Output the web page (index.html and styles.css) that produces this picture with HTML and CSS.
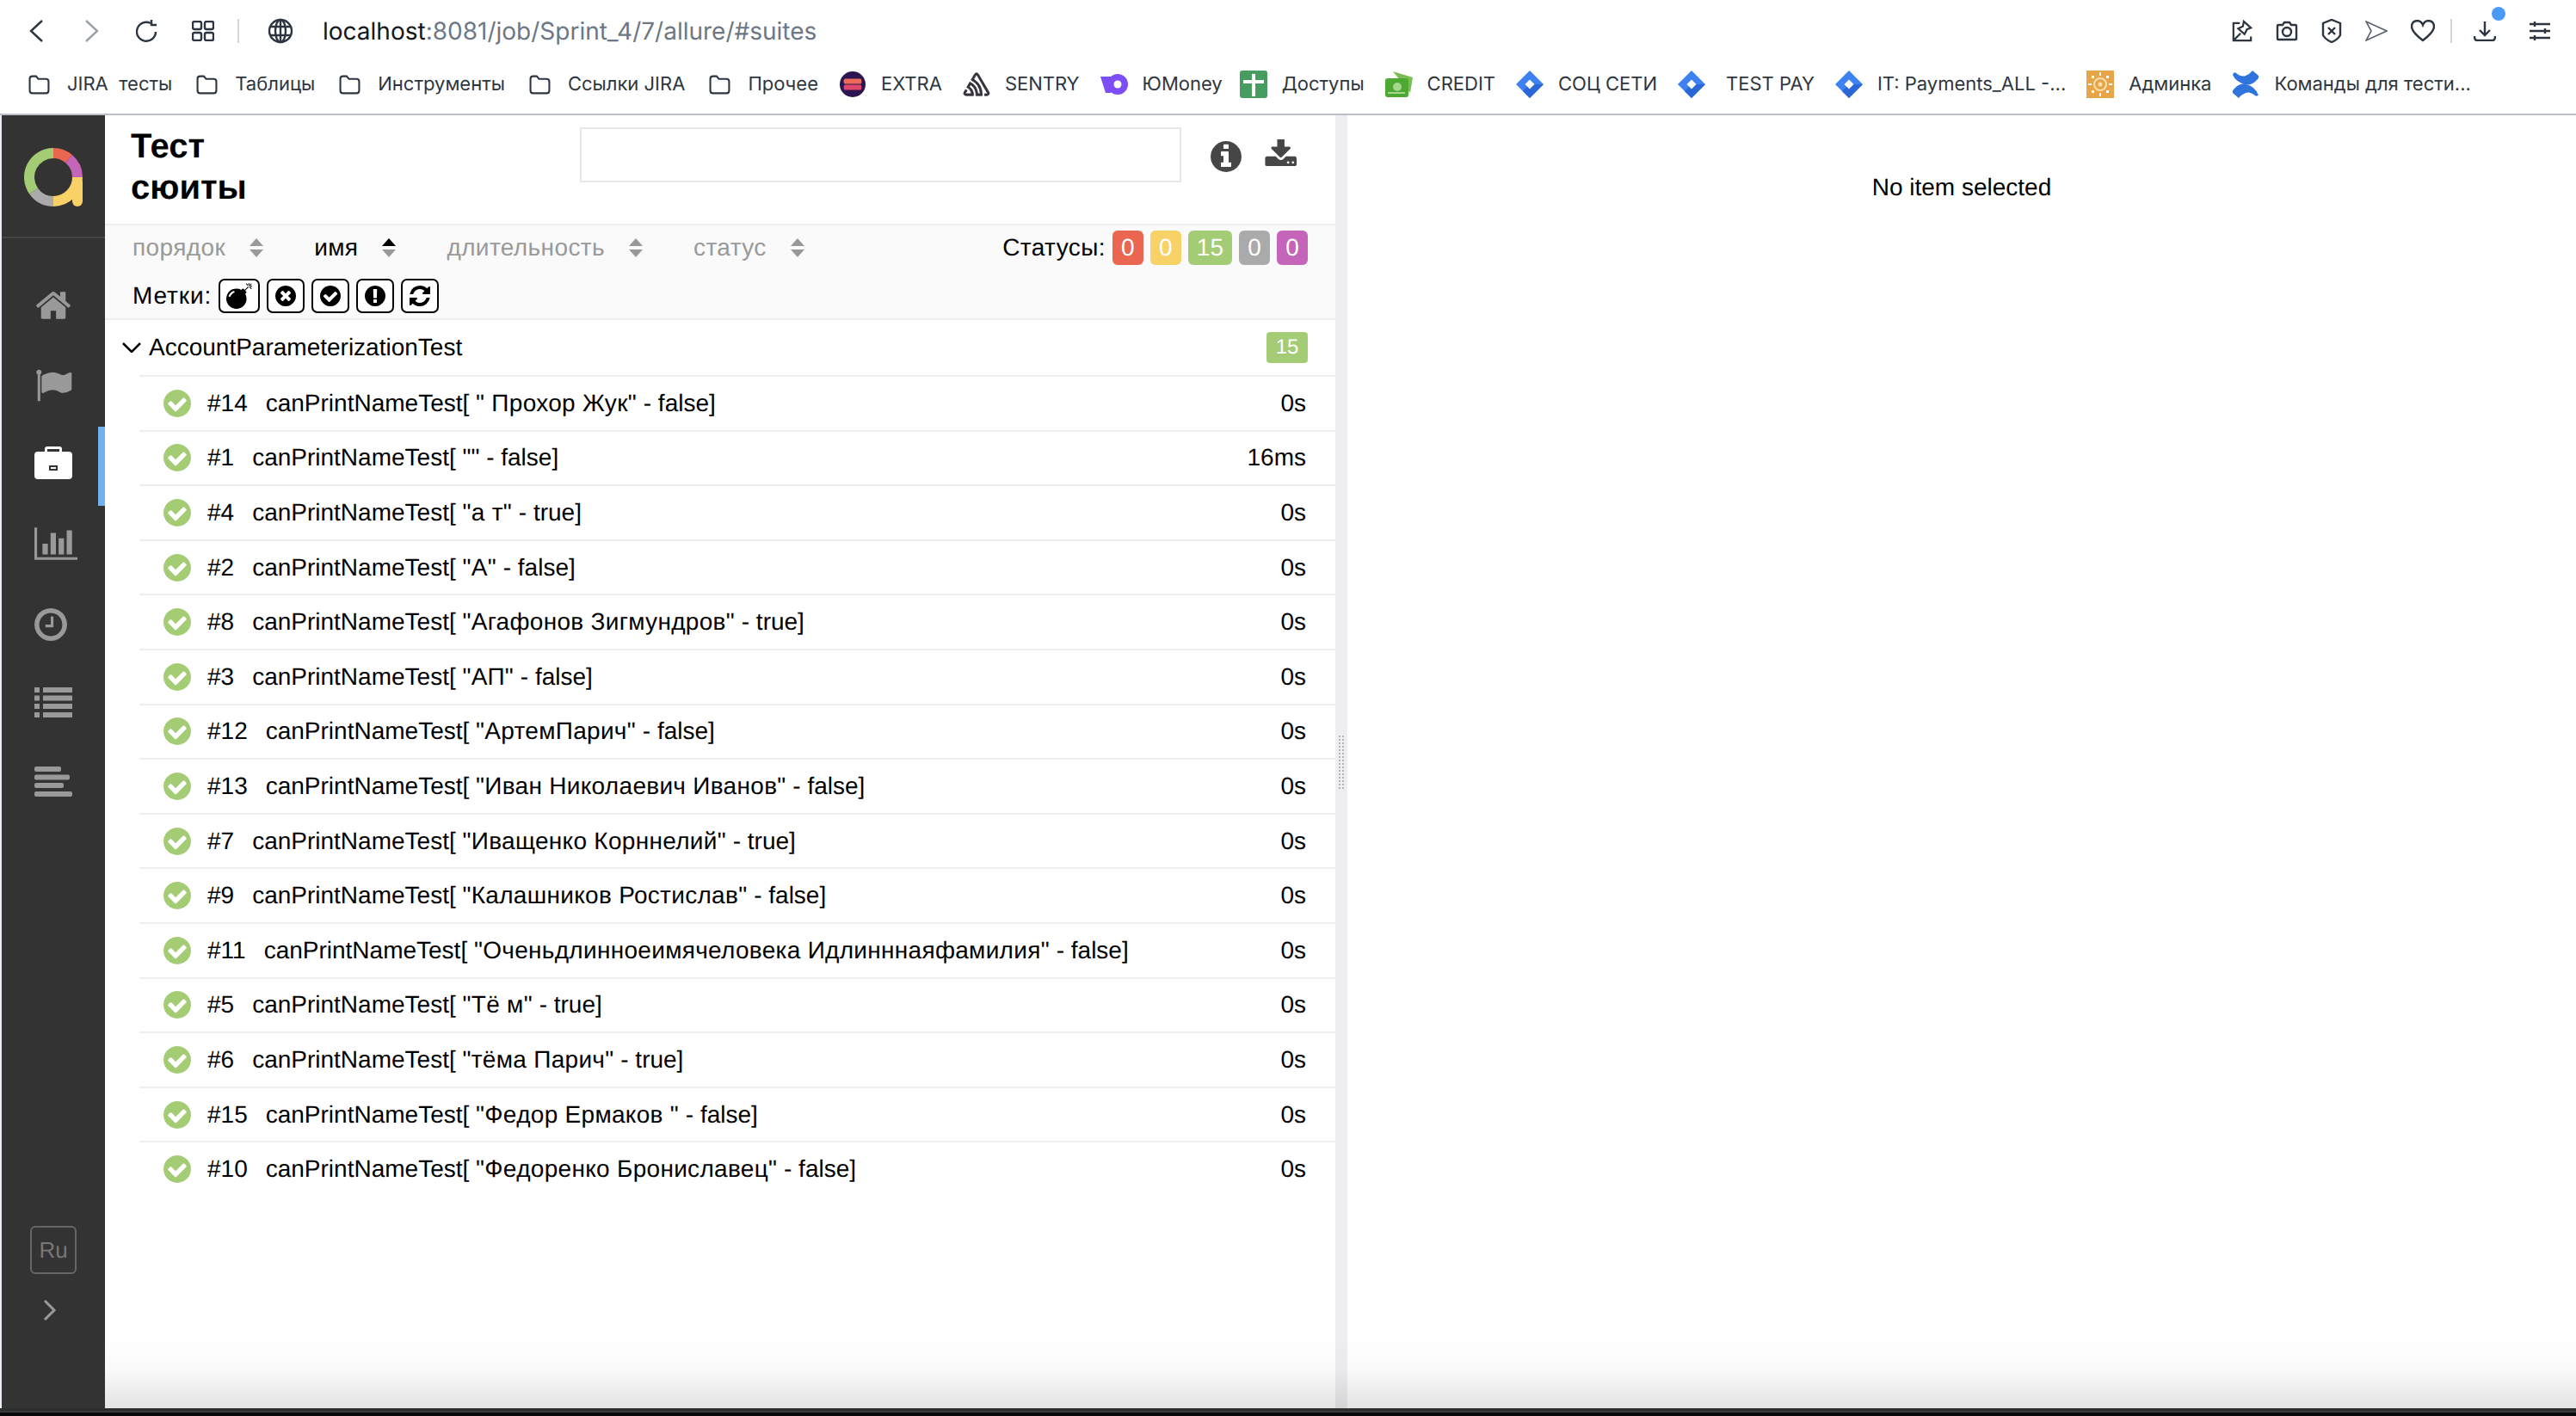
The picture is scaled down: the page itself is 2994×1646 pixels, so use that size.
FILE: index.html
```html
<!DOCTYPE html>
<html>
    <head>
        <meta charset="utf-8" />
        <title>Allure Report</title>
        <link rel="stylesheet" href="styles.css">
    </head>
    <body>
        <svg class="sprite" xmlns="http://www.w3.org/2000/svg">
            <symbol id="folder" viewBox="0 0 24 22"><path d="M1.500 4.500q0-3 3-3h4l2.500 3h8.500q3 0 3 3v10q0 3-3 3h-15q-3 0-3-3z" fill="none" stroke="currentColor" stroke-width="2"/></symbol>
            <symbol id="jira" viewBox="0 0 32 32"><path d="M16 0L32 16 16 32 0 16z" fill="#3d82f0"/><path d="M16 16L32 16 16 32 8 24z" fill="#2a66d6"/><path d="M16 10.500L21.500 16 16 21.500 10.500 16z" fill="#fff"/></symbol>
            <symbol id="check" viewBox="128 128 1536 1536"><path d="M1412 734q0-28-18-46l-91-90q-19-19-45-19t-45 19l-408 407-226-226q-19-19-45-19t-45 19l-91 90q-18 18-18 46 0 27 18 45l362 362q19 19 45 19 27 0 46-19l543-543q18-18 18-45zm252 162q0 209-103 385.500t-279.500 279.500-385.500 103-385.500-103-279.500-279.500-103-385.500 103-385.500 279.500-279.500 385.500-103 385.500 103 279.500 279.500 103 385.500z"/></symbol>
        </svg>

        <header class="browser">
            <div class="browser_top">
                <svg class="bi bi_back" viewBox="0 0 18 28"><path d="M16 2L3 14l13 12"/></svg>
                <svg class="bi bi_fwd" viewBox="0 0 18 28"><path d="M2 2l13 12L2 26"/></svg>
                <svg class="bi bi_reload" viewBox="0 0 26 28"><path d="M23 15a11 11 0 1 1-6-10"/><path d="M18 1v6h6" /></svg>
                <svg class="bi bi_grid" viewBox="0 0 26 24"><rect x="1" y="1" width="10" height="9" rx="2"/><rect x="15" y="1" width="10" height="9" rx="2"/><rect x="1" y="14" width="10" height="9" rx="2"/><rect x="15" y="14" width="10" height="9" rx="2"/></svg>
                <div class="bsep"></div>
                <svg class="bi bi_globe" viewBox="0 0 30 30"><circle cx="15" cy="15" r="13"/><ellipse cx="15" cy="15" rx="6" ry="13"/><path d="M3 10h24M3 20h24M15 2v26"/></svg>
                <div class="address"><b>localhost</b>:8081/job/Sprint_4/7/allure/#suites</div>
                <div class="browser_tools">
                    <svg class="bi" width="24" height="26" viewBox="0 0 26 28"><path d="M10 4H2v22h22v-5"/><path d="M3 25l8-8M15 2l9 8-5 2-3 6-8-7 6-3z"/></svg>
                    <svg class="bi" width="26" height="24" viewBox="0 0 26 24"><path d="M2 6q0-1 1-1h5l2-3h6l2 3h5q1 0 1 1v15q0 1-1 1H3q-1 0-1-1z"/><circle cx="13" cy="13" r="5"/></svg>
                    <svg class="bi" width="24" height="28" viewBox="0 0 24 28"><path d="M12 1l10 4v14q-3 5-10 8Q5 24 2 19V5z"/><path d="M8 10l8 8M16 10l-8 8"/></svg>
                    <svg class="bi bi_thin" width="26" height="24" viewBox="0 0 26 24"><path d="M1 1l24 11L1 23l6-11z"/></svg>
                    <svg class="bi" width="28" height="26" viewBox="0 0 28 26"><path d="M14 24Q1 14 1 8q0-6 6-7 5 0 7 5 2-5 7-5 6 1 6 7 0 6-13 16z"/></svg>
                    <div class="bsep bsep_tools"></div>
                    <div class="dl">
                        <svg class="bi" width="26" height="24" viewBox="0 0 26 24"><path d="M13 1v16M7 11l6 6 6-6M1 18q0 5 3 5h18q3 0 3-5"/></svg>
                        <span class="dl_dot"></span>
                    </div>
                    <svg class="bi bi_sliders" width="24" height="22" viewBox="0 0 24 22"><path d="M0 3h24M0 11h24M0 19h24M6 0v6M18 8v6M6 16v6"/></svg>
                </div>
            </div>
            <div class="bookmarks">
                <a class="bm_dir"><svg class="bm_folder"><use href="#folder"/></svg>JIRA&nbsp; тесты</a>
                <a class="bm_dir"><svg class="bm_folder"><use href="#folder"/></svg>Таблицы</a>
                <a class="bm_dir"><svg class="bm_folder"><use href="#folder"/></svg>Инструменты</a>
                <a class="bm_dir"><svg class="bm_folder"><use href="#folder"/></svg>Ссылки JIRA</a>
                <a class="bm_dir"><svg class="bm_folder"><use href="#folder"/></svg>Прочее</a>
                <a><svg class="bm_icon" viewBox="0 0 32 32"><circle cx="16" cy="16" r="16" fill="#2c1650"/><rect x="5" y="9" width="22" height="6.500" rx="2" fill="#ee6a58"/><rect x="5" y="16.500" width="22" height="6.500" rx="2" fill="#e2466a"/></svg>EXTRA</a>
                <a><svg class="bm_icon" viewBox="0 0 24 24"><path fill="#36323c" stroke="#36323c" stroke-width=".6" d="M13.910 2.505c-.873-1.448-2.972-1.448-3.844 0L6.904 7.920a15.478 15.478 0 0 1 8.530 12.811h-2.221A13.301 13.301 0 0 0 5.784 9.814l-2.926 5.060a7.650 7.650 0 0 1 4.435 5.848H2.194a.365.365 0 0 1-.298-.534l1.413-2.402a5.160 5.160 0 0 0-1.614-.913L.296 19.275a2.182 2.182 0 0 0 .812 2.999 2.240 2.240 0 0 0 1.086.288h6.983a9.322 9.322 0 0 0-3.845-8.318l1.110-1.922a11.470 11.470 0 0 1 4.950 10.240h5.915a17.242 17.242 0 0 0-7.885-15.280l2.244-3.845a.370.370 0 0 1 .504-.130c.255.140 9.750 16.708 9.928 16.900a.365.365 0 0 1-.327.543h-2.287c.029.612.029 1.223 0 1.831h2.297a2.206 2.206 0 0 0 1.922-3.310z"/></svg>SENTRY</a>
                <a class="bm_tight"><svg class="bm_icon" viewBox="0 0 32 24"><path fill="#7d4df5" d="M0 3h12v19H6z"/><circle cx="20" cy="12" r="12" fill="#7d4df5"/><circle cx="20" cy="12" r="4.500" fill="#fff"/></svg>ЮMoney</a>
                <a><svg class="bm_icon bm_tall" viewBox="0 0 32 32"><rect width="32" height="32" rx="3" fill="#479c60"/><path d="M14 4h4v26h-4zM4 11h24v4H4z" fill="#fff"/></svg>Доступы</a>
                <a><svg class="bm_icon bm_tall" viewBox="0 0 32 32"><path d="M9 1l23 7-3 18z" fill="#7cbc52"/><rect y="9" width="27" height="22" rx="3" fill="#4da934"/><circle cx="14" cy="19" r="5" fill="#a4d98c"/><rect x="3" y="25" width="20" height="2" fill="#a4d98c"/></svg>CREDIT</a>
                <a><svg class="bm_icon bm_tall"><use href="#jira"/></svg>СОЦ СЕТИ</a>
                <a class="bm_wide"><svg class="bm_icon bm_tall"><use href="#jira"/></svg>TEST PAY</a>
                <a><svg class="bm_icon bm_tall"><use href="#jira"/></svg>IT: Payments_ALL -...</a>
                <a><svg class="bm_icon bm_tall" viewBox="0 0 32 32"><rect width="32" height="32" fill="#e8a548"/><circle cx="16" cy="16" r="7" fill="none" stroke="#f8dfb0" stroke-width="2"/><circle cx="16" cy="16" r="2.500" fill="#f8dfb0"/><path d="M15 2h2v4h-2zM15 26h2v4h-2zM2 15h4v2H2zM26 15h4v2h-4zM6 6h3v3H6zM23 6h3v3h-3zM6 23h3v3H6zM23 23h3v3h-3z" fill="#fff"/></svg>Админка</a>
                <a><svg class="bm_icon bm_tall" viewBox="0 0 32 32"><path fill="#2f74dc" d="M1 5q1-4 4-2 6 5 11 3 5-2 8-6l7 6q1 2-1 4-7 8-14 6Q5 14 1 5zM31 27q-1 4-4 2-6-5-11-3-5 2-8 6l-7-6q-1-2 1-4 7-8 14-6 11 2 15 13z"/></svg>Команды для тести...</a>
            </div>
        </header>

        <div class="app">
            <nav class="side">
                <div class="side_logo">
                    <svg class="logo" viewBox="0 0 68 68" fill="none" stroke-width="12">
                        <rect x="56" y="34" width="12" height="34" rx="6" fill="#f8d267"/>
                        <path d="M34 6A28 28 0 0 1 52 12.600" stroke="#ea6650"/>
                        <path d="M52 12.600A28 28 0 0 1 62 34" stroke="#c465b9"/>
                        <path d="M62 34A28 28 0 0 1 34 62" stroke="#f8d267"/>
                        <path d="M34 62A28 28 0 0 1 11.100 50.100" stroke="#aaaaaa"/>
                        <path d="M11.100 50.100A28 28 0 0 1 34 6" stroke="#a3cc74"/>
                    </svg>
                </div>
                <ul class="side_menu">
                    <li><svg viewBox="128 128 1536 1536" class="nav_ic nav_home"><path d="M1472 992v480q0 26-19 45t-45 19h-384v-384h-256v384h-384q-26 0-45-19t-19-45v-480q0-1 .5-3t.5-3l575-474 575 474q1 2 1 6zm223-69l-62 74q-8 9-21 11h-3q-13 0-21-7l-692-577-692 577q-12 8-24 7-13-2-21-11l-62-74q-8-10-7-23.500t11-21.500l719-599q32-26 76-26t76 26l244 204v-195q0-14 9-23t23-9h192q14 0 23 9t9 23v408l219 182q10 8 11 21.500t-7 23.500z"/></svg></li>
                    <li><svg viewBox="0 100 1792 1600" class="nav_ic"><path d="M320 256q0 72-64 110v1266q0 13-9.500 22.500t-22.500 9.500h-64q-13 0-22.500-9.500t-9.500-22.500v-1266q-64-38-64-110 0-53 37.500-90.500t90.500-37.500 90.500 37.500 37.500 90.500zm1472 64v763q0 25-12.500 38.500t-39.500 27.500q-215 116-369 116-61 0-123.500-22t-108.500-48-115.500-48-142.500-22q-192 0-464 146-17 9-33 9-26 0-45-19t-19-45v-742q0-32 31-55 21-14 79-43 236-120 421-120 107 0 200 29t219 88q38 19 88 19 54 0 117.500-21t110-47 88-47 54.500-21q26 0 45 19t19 45z"/></svg></li>
                    <li class="active"><svg viewBox="0 0 44 38" class="nav_ic nav_case"><path fill-rule="evenodd" d="M12 6V3q0-3 3-3h14q3 0 3 3v3h8q4 0 4 4v24q0 4-4 4H4q-4 0-4-4V10q0-4 4-4zM15 3v3h14V3zM17 22v6h10v-6zM19 24h6v2h-6z"/></svg></li>
                    <li><svg viewBox="0 128 2048 1536" class="nav_ic nav_chart"><path d="M640 896v512h-256v-512h256zm384-512v1024h-256v-1024h256zm1024 1152v128h-2048v-1536h128v1408h1920zm-640-896v768h-256v-768h256zm384-384v1152h-256v-1152h256z"/></svg></li>
                    <li><svg viewBox="128 128 1536 1536" class="nav_ic nav_clock"><path d="M1024 544v448q0 14-9 23t-23 9h-320q-14 0-23-9t-9-23v-64q0-14 9-23t23-9h224v-352q0-14 9-23t23-9h64q14 0 23 9t9 23zm416 352q0-148-73-273t-198-198-273-73-273 73-198 198-73 273 73 273 198 198 273 73 273-73 198-198 73-273zm224 0q0 209-103 385.500t-279.500 279.500-385.500 103-385.500-103-279.500-279.500-103-385.500 103-385.500 279.500-279.500 385.500-103 385.500 103 279.500 279.500 103 385.500z"/></svg></li>
                    <li><svg viewBox="0 0 44 35" class="nav_ic nav_list"><path d="M0 0h6v6H0zM10 0h34v6H10zM0 9.500h6v6H0zM10 9.500h34v6H10zM0 19h6v6H0zM10 19h34v6H10zM0 29h6v6H0zM10 29h34v6H10z"/></svg></li>
                    <li><svg viewBox="0 0 44 35" class="nav_ic nav_list"><rect width="31" height="6" rx="2"/><rect y="9.500" width="41" height="6" rx="2"/><rect y="19" width="34" height="6" rx="2"/><rect y="29" width="44" height="6" rx="2"/></svg></li>
                </ul>
                <div class="side_bottom">
                    <div class="lang">Ru</div>
                    <svg class="side_expand" viewBox="0 0 16 24"><path d="M2 1l11 11L2 23"/></svg>
                </div>
            </nav>

            <div class="panes">
                <section class="pane_left">
                    <div class="pane_head">
                        <h2 class="pane_title">Тест<br>сюиты</h2>
                        <input class="search" type="text">
                        <svg class="head_ic head_info" viewBox="128 128 1536 1536"><path d="M1152 1376v-160q0-14-9-23t-23-9h-96v-512q0-14-9-23t-23-9h-320q-14 0-23 9t-9 23v160q0 14 9 23t23 9h96v320h-96q-14 0-23 9t-9 23v160q0 14 9 23t23 9h448q14 0 23-9t9-23zm-128-896v-160q0-14-9-23t-23-9h-192q-14 0-23 9t-9 23v160q0 14 9 23t23 9h192q14 0 23-9t9-23zm640 416q0 209-103 385.500t-279.500 279.500-385.500 103-385.500-103-279.500-279.500-103-385.500 103-385.500 279.500-279.500 385.500-103 385.500 103 279.500 279.500 103 385.500z"/></svg>
                        <svg class="head_ic head_dl" viewBox="0 128 1728 1536"><path d="M1344 1344q0-26-19-45t-45-19-45 19-19 45 19 45 45 19 45-19 19-45zm256 0q0-26-19-45t-45-19-45 19-19 45 19 45 45 19 45-19 19-45zm128-224v320q0 40-28 68t-68 28h-1472q-40 0-68-28t-28-68v-320q0-40 28-68t68-28h465l135 136q58 56 136 56t136-56l136-136h464q40 0 68 28t28 68zm-325-569q17 41-14 70l-448 448q-18 19-45 19t-45-19l-448-448q-31-29-14-70 17-39 59-39h256v-448q0-26 19-45t45-19h256q26 0 45 19t19 45v448h256q42 0 59 39z"/></svg>
                    </div>

                    <div class="filters">
                        <div class="filters_row">
                            <span class="sort">порядок <svg viewBox="0 0 18 22"><path d="M9 0l8 9H1zM9 22l8-9H1z"/></svg></span>
                            <span class="sort sort_on">имя <svg viewBox="0 0 18 22"><path class="up" d="M9 0l8 9H1z"/><path d="M9 22l8-9H1z"/></svg></span>
                            <span class="sort">длительность <svg viewBox="0 0 18 22"><path d="M9 0l8 9H1zM9 22l8-9H1z"/></svg></span>
                            <span class="sort">статус <svg viewBox="0 0 18 22"><path d="M9 0l8 9H1zM9 22l8-9H1z"/></svg></span>
                            <div class="statuses">
                                <span class="statuses_label">Статусы:</span>
                                <span class="badge failed">0</span>
                                <span class="badge broken">0</span>
                                <span class="badge passed">15</span>
                                <span class="badge skipped">0</span>
                                <span class="badge unknown">0</span>
                            </div>
                        </div>
                        <div class="marks">
                            <span class="marks_label">Метки:</span>
                            <span class="mark mark_first"><svg viewBox="0 0 1792 1792"><path d="M571 589q-10-25-34-35t-49 0q-108 44-191 127t-127 191q-10 25 0 49t35 34q13 5 24 5 42 0 60-40 34-84 98.500-148.500t148.500-98.500q25-11 35-35t0-49zm942-356l46 46-244 243 68 68q19 19 19 45.500t-19 45.500l-64 64q89 161 89 343 0 143-55.500 273.500t-150 225-225 150-273.500 55.500-273.500-55.500-225-150-150-225-55.500-273.500 55.500-273.500 150-225 225-150 273.500-55.500q182 0 343 89l64-64q19-19 45.500-19t45.500 19l68 68zm8-56q-10 10-22 10-13 0-23-10l-91-90q-9-10-9-23t9-23q10-9 23-9t23 9l90 91q10 9 10 22.500t-10 22.500zm230 230q-11 9-23 9t-23-9l-90-91q-10-9-10-22.500t10-22.500q9-10 22.500-10t22.500 10l91 90q9 10 9 23t-9 23zm41-183q0 14-9 23t-23 9h-96q-14 0-23-9t-9-23 9-23 23-9h96q14 0 23 9t9 23zm-192-192v96q0 14-9 23t-23 9-23-9-9-23v-96q0-14 9-23t23-9 23 9 9 23zm151 55l-91 90q-10 10-22 10-13 0-23-10-10-9-10-22.500t10-22.500l90-91q10-9 23-9t23 9q9 10 9 23t-9 23z"/></svg></span>
                            <span class="mark"><svg viewBox="128 128 1536 1536"><path d="M1277 1122q0-26-19-45l-181-181 181-181q19-19 19-45 0-27-19-46l-90-90q-19-19-46-19-26 0-45 19l-181 181-181-181q-19-19-45-19-27 0-46 19l-90 90q-19 19-19 46 0 26 19 45l181 181-181 181q-19 19-19 45 0 27 19 46l90 90q19 19 46 19 26 0 45-19l181-181 181 181q19 19 45 19 27 0 46-19l90-90q19-19 19-46zm387-226q0 209-103 385.500t-279.500 279.500-385.500 103-385.500-103-279.500-279.500-103-385.500 103-385.500 279.500-279.500 385.500-103 385.500 103 279.500 279.500 103 385.500z"/></svg></span>
                            <span class="mark"><svg><use href="#check"/></svg></span>
                            <span class="mark"><svg viewBox="128 128 1536 1536"><path d="M896 128q209 0 385.500 103t279.500 279.500 103 385.500-103 385.500-279.500 279.500-385.500 103-385.500-103-279.500-279.500-103-385.500 103-385.500 279.500-279.500 385.500-103zm128 1247v-190q0-14-9-23.500t-22-9.500h-192q-13 0-23 10t-10 23v190q0 13 10 23t23 10h192q13 0 22-9.500t9-23.500zm-2-344l18-621q0-12-10-18-10-8-24-8h-220q-14 0-24 8-10 6-10 18l17 621q0 10 10 17.500t24 7.500h185q14 0 23.500-7.500t10.500-17.500z"/></svg></span>
                            <span class="mark"><svg viewBox="128 128 1536 1536"><path d="M1639 1056q0 5-1 7-64 268-268 434.500t-478 166.500q-146 0-282.500-55t-243.500-157l-129 129q-19 19-45 19t-45-19-19-45v-448q0-26 19-45t45-19h448q26 0 45 19t19 45-19 45l-137 137q71 66 161 102t187 36q134 0 250-65t186-179q11-17 53-117 8-23 30-23h192q13 0 22.500 9.500t9.500 22.500zm25-800v448q0 26-19 45t-45 19h-448q-26 0-45-19t-19-45 19-45l138-138q-148-137-349-137-134 0-250 65t-186 179q-11 17-53 117-8 23-30 23h-199q-13 0-22.500-9.500t-9.500-22.500v-7q65-268 270-434.500t480-166.500q146 0 284 55.500t245 156.500l130-129q19-19 45-19t45 19 19 45z"/></svg></span>
                        </div>
                    </div>

                    <div class="group_head">
                        <svg class="group_arrow" viewBox="0 0 22 12"><path d="M1 1l10 10L21 1"/></svg>
                        <span>AccountParameterizationTest</span>
                        <span class="badge_small">15</span>
                    </div>

                    <div class="tree_row"><svg class="st_ic"><use href="#check"/></svg><span class="num">#14</span><span>canPrintNameTest[ <span class="arg">" Прохор Жук"</span> - false]</span><span class="dur">0s</span></div>
                    <div class="tree_row"><svg class="st_ic"><use href="#check"/></svg><span class="num">#1</span><span>canPrintNameTest[ "" - false]</span><span class="dur">16ms</span></div>
                    <div class="tree_row"><svg class="st_ic"><use href="#check"/></svg><span class="num">#4</span><span>canPrintNameTest[ <span class="arg">"а т"</span> - true]</span><span class="dur">0s</span></div>
                    <div class="tree_row"><svg class="st_ic"><use href="#check"/></svg><span class="num">#2</span><span>canPrintNameTest[ <span class="arg">"А"</span> - false]</span><span class="dur">0s</span></div>
                    <div class="tree_row"><svg class="st_ic"><use href="#check"/></svg><span class="num">#8</span><span>canPrintNameTest[ <span class="arg">"Агафонов Зигмундров"</span> - true]</span><span class="dur">0s</span></div>
                    <div class="tree_row"><svg class="st_ic"><use href="#check"/></svg><span class="num">#3</span><span>canPrintNameTest[ <span class="arg">"АП"</span> - false]</span><span class="dur">0s</span></div>
                    <div class="tree_row"><svg class="st_ic"><use href="#check"/></svg><span class="num">#12</span><span>canPrintNameTest[ <span class="arg">"АртемПарич"</span> - false]</span><span class="dur">0s</span></div>
                    <div class="tree_row"><svg class="st_ic"><use href="#check"/></svg><span class="num">#13</span><span>canPrintNameTest[ <span class="arg">"Иван Николаевич Иванов"</span> - false]</span><span class="dur">0s</span></div>
                    <div class="tree_row"><svg class="st_ic"><use href="#check"/></svg><span class="num">#7</span><span>canPrintNameTest[ <span class="arg">"Иващенко Корннелий"</span> - true]</span><span class="dur">0s</span></div>
                    <div class="tree_row"><svg class="st_ic"><use href="#check"/></svg><span class="num">#9</span><span>canPrintNameTest[ <span class="arg">"Калашников Ростислав"</span> - false]</span><span class="dur">0s</span></div>
                    <div class="tree_row"><svg class="st_ic"><use href="#check"/></svg><span class="num">#11</span><span>canPrintNameTest[ <span class="arg">"Оченьдлинноеимячеловека Идлинннаяфамилия"</span> - false]</span><span class="dur">0s</span></div>
                    <div class="tree_row"><svg class="st_ic"><use href="#check"/></svg><span class="num">#5</span><span>canPrintNameTest[ <span class="arg">"Тё м"</span> - true]</span><span class="dur">0s</span></div>
                    <div class="tree_row"><svg class="st_ic"><use href="#check"/></svg><span class="num">#6</span><span>canPrintNameTest[ <span class="arg">"тёма Парич"</span> - true]</span><span class="dur">0s</span></div>
                    <div class="tree_row"><svg class="st_ic"><use href="#check"/></svg><span class="num">#15</span><span>canPrintNameTest[ <span class="arg">"Федор Ермаков "</span> - false]</span><span class="dur">0s</span></div>
                    <div class="tree_row"><svg class="st_ic"><use href="#check"/></svg><span class="num">#10</span><span>canPrintNameTest[ <span class="arg">"Федоренко Брониславец"</span> - false]</span><span class="dur">0s</span></div>
                </section>

                <div class="splitter"><span class="grip"></span></div>

                <section class="pane_right">No item selected</section>
            </div>
        </div>
        <div class="dock"></div>
    </body>
</html>
```

FILE: styles.css
```css
*{
    box-sizing: border-box;
}
html,body{
    margin: 0;
    height: 100%;
}
body{
    display: flex;
    flex-direction: column;
    overflow: hidden;
    font-family: "Liberation Sans", Arial, sans-serif;
    font-size: 28px;
    text-rendering: geometricPrecision;
    color: #000;
    background: #fff;
}
.sprite{
    display: none;
}

/*browser chrome*/
.browser{
    flex: none;
    height: 134px;
    border-bottom: 2px solid #b9c0c8;
    font-family: Inter, "Noto Sans", sans-serif;
    color: #2d3640;
}
.browser_top{
    display: flex;
    align-items: center;
    height: 72px;
    padding-left: 33px;
}
.bi{
    flex: none;
    fill: none;
    stroke: #2d3640;
    stroke-width: 2.4;
}
.bi_back{
    width: 18px;
    height: 28px;
}
.bi_fwd{
    width: 18px;
    height: 28px;
    margin-left: 47px;
    stroke: #9aa1a8;
}
.bi_reload{
    width: 26px;
    height: 28px;
    margin-left: 42px;
}
.bi_grid{
    width: 26px;
    height: 24px;
    margin-left: 39px;
}
.bsep{
    width: 2px;
    height: 28px;
    margin-left: 27px;
    background: #d5d7da;
}
.bi_globe{
    width: 30px;
    height: 30px;
    margin-left: 33px;
}
.address{
    margin-left: 34px;
    font-size: 28px;
    color: #6c7885;
    white-space: nowrap;
}
.address b{
    font-weight: 400;
    color: #14181d;
}
.browser_tools{
    display: flex;
    align-items: center;
    gap: 27px;
    margin-left: auto;
    padding-right: 30px;
}
.bi_thin{
    stroke-width: 1.6;
    stroke: #5a6270;
}
.bsep_tools{
    margin: 0 -2px 0 -9px;
}
.dl{
    position: relative;
    display: flex;
}
.dl_dot{
    position: absolute;
    top: -16px;
    left: 21px;
    width: 16px;
    height: 16px;
    border-radius: 50%;
    background: #4a9bf5;
}
.bi_sliders{
    margin-left: 12px;
}
.bookmarks{
    display: flex;
    align-items: center;
    gap: 24px;
    height: 52px;
    padding-left: 33px;
    font-size: 22px;
    white-space: nowrap;
}
.bookmarks a{
    display: flex;
    align-items: center;
    gap: 17px;
}
.bookmarks .bm_dir + .bm_dir{
    margin-left: 4px;
}
.bookmarks .bm_wide{
    gap: 24px;
}
.bookmarks .bm_tight{
    margin-right: -4px;
}
.bm_folder{
    width: 25px;
    height: 23px;
    margin-right: 3px;
}
.bm_icon{
    width: 32px;
    height: 30px;
}
.bm_tall{
    height: 32px;
}

/*allure app*/
.app{
    flex: 1;
    display: flex;
    min-height: 0;
    padding-left: 2px;
    background: #e8eef5;
}
.side{
    flex: none;
    display: flex;
    flex-direction: column;
    width: 120px;
    background: #333;
}
.side_logo{
    height: 143px;
    padding: 38px 0 0 26px;
    border-bottom: 2px solid #444;
}
.logo{
    display: block;
    width: 68px;
    height: 68px;
}
.side_menu{
    list-style: none;
    margin: 35px 0 0;
    padding: 0;
}
.side_menu li{
    display: flex;
    align-items: center;
    height: 92px;
    padding: 0 0 4px 38px;
}
.side_menu li.active{
    border-right: 8px solid #72b0f0;
}
.nav_ic{
    width: 44px;
    height: 38px;
    fill: #999;
}
.active .nav_ic{
    fill: #fff;
}
.nav_home{
    margin-bottom: 2px;
}
.nav_case{
    margin-bottom: 4px;
}
.nav_chart{
    width: 50px;
    height: 38px;
}
.nav_clock{
    width: 38px;
    margin-top: 4px;
}
.nav_list{
    height: 35px;
}
.side_bottom{
    margin-top: auto;
    padding: 0 0 102px 33px;
}
.lang{
    width: 54px;
    height: 56px;
    border: 2px solid #666;
    border-radius: 6px;
    line-height: 52px;
    text-align: center;
    font-size: 26px;
    color: #777;
}
.side_expand{
    display: block;
    width: 16px;
    height: 24px;
    margin: 30px 0 0 15px;
    fill: none;
    stroke: #999;
    stroke-width: 3;
}

.panes{
    flex: 1;
    display: flex;
    position: relative;
    background: #fff;
}
/*the dock's shadow falls over both panes*/
.panes::after{
    content: "";
    position: absolute;
    left: 0;
    right: 0;
    bottom: 0;
    height: 84px;
    background: linear-gradient(rgba(0,0,0,0), rgba(0,0,0,.02) 45%, rgba(0,0,0,.11));
    pointer-events: none;
}
.pane_left{
    flex: none;
    width: 1430px;
}
.splitter{
    flex: none;
    display: flex;
    align-items: center;
    justify-content: center;
    width: 14px;
    background: #eeeef0;
}
.grip{
    width: 8px;
    height: 64px;
    background: radial-gradient(circle, #b5b5b5 1px, transparent 1.5px) 0 0 / 4px 4px;
}
.pane_right{
    flex: 1;
    padding-top: 67px;
    text-align: center;
    line-height: 34px;
}

.pane_head{
    display: flex;
    height: 128px;
    padding: 14px 0 0 30px;
    border-bottom: 2px solid #eee;
}
.pane_title{
    flex: none;
    width: 522px;
    margin: -2px 0 0;
    font-size: 40px;
    line-height: 48px;
    font-weight: 700;
}
.search{
    flex: none;
    width: 699px;
    height: 64px;
    border: 2px solid #e6e6e6;
    background: #fff;
}
.head_ic{
    flex: none;
    fill: #464646;
}
.head_info{
    width: 36px;
    height: 36px;
    margin: 16px 0 0 34px;
}
.head_dl{
    width: 38px;
    height: 34px;
    margin: 14px 0 0 26px;
}

.filters{
    height: 110px;
    padding: 6px 32px 0 32px;
    border-bottom: 2px solid #eee;
    background: #fafafa;
}
.filters_row{
    display: flex;
    align-items: center;
    height: 40px;
}
.sort{
    display: flex;
    align-items: center;
    gap: 27px;
    margin-right: 58px;
    letter-spacing: .4px;
    color: #999;
}
.sort svg{
    width: 18px;
    height: 22px;
    fill: #999;
}
.sort_on{
    color: #000;
}
.sort_on .up{
    fill: #000;
}
.statuses{
    display: flex;
    align-items: center;
    gap: 8px;
    margin-left: auto;
}
.statuses_label{
    letter-spacing: .4px;
}
.badge{
    min-width: 36px;
    height: 40px;
    padding: 0 10px;
    border-radius: 6px;
    line-height: 40px;
    text-align: center;
    color: #fff;
}
.failed{
    background: #ea6650;
}
.broken{
    background: #f8d267;
}
.passed{
    background: #a3cc74;
}
.skipped{
    background: #aaa;
}
.unknown{
    background: #c465b9;
}
.marks{
    display: flex;
    align-items: center;
    gap: 8px;
    margin-top: 16px;
}
.marks_label{
    letter-spacing: .9px;
}
.mark{
    display: flex;
    align-items: center;
    justify-content: center;
    width: 44px;
    height: 40px;
    border: 2px solid #000;
    border-radius: 7px;
    background: #fff;
}
.mark_first{
    width: 48px;
}
.mark svg{
    width: 24px;
    height: 24px;
}
.mark_first svg{
    width: 30px;
    height: 30px;
}

.group_head{
    display: flex;
    align-items: center;
    height: 64px;
    padding: 0 32px 0 20px;
}
.group_arrow{
    width: 22px;
    height: 12px;
    margin-right: 9px;
    fill: none;
    stroke: #000;
    stroke-width: 2.5;
}
.badge_small{
    margin-left: auto;
    width: 48px;
    height: 36px;
    border-radius: 4px;
    background: #a3cc74;
    line-height: 36px;
    text-align: center;
    font-size: 24px;
    color: #fff;
}
.tree_row{
    display: flex;
    align-items: center;
    height: 63.6px;
    margin-left: 40px;
    padding: 0 34px 0 28px;
    border-top: 2px solid #eee;
    white-space: pre;
}
.arg{
    letter-spacing: .3px;
}
.st_ic{
    flex: none;
    width: 32px;
    height: 32px;
    margin-right: 19px;
    fill: #a3cc74;
}
.num{
    margin-right: 21px;
}
.dur{
    margin-left: auto;
}

.dock{
    flex: none;
    height: 9px;
    background: linear-gradient(#2c2d2d, #2c2d2d 3px, #3a3b3b 3px, #3a3b3b 5px, #08080c 5px);
}
```
